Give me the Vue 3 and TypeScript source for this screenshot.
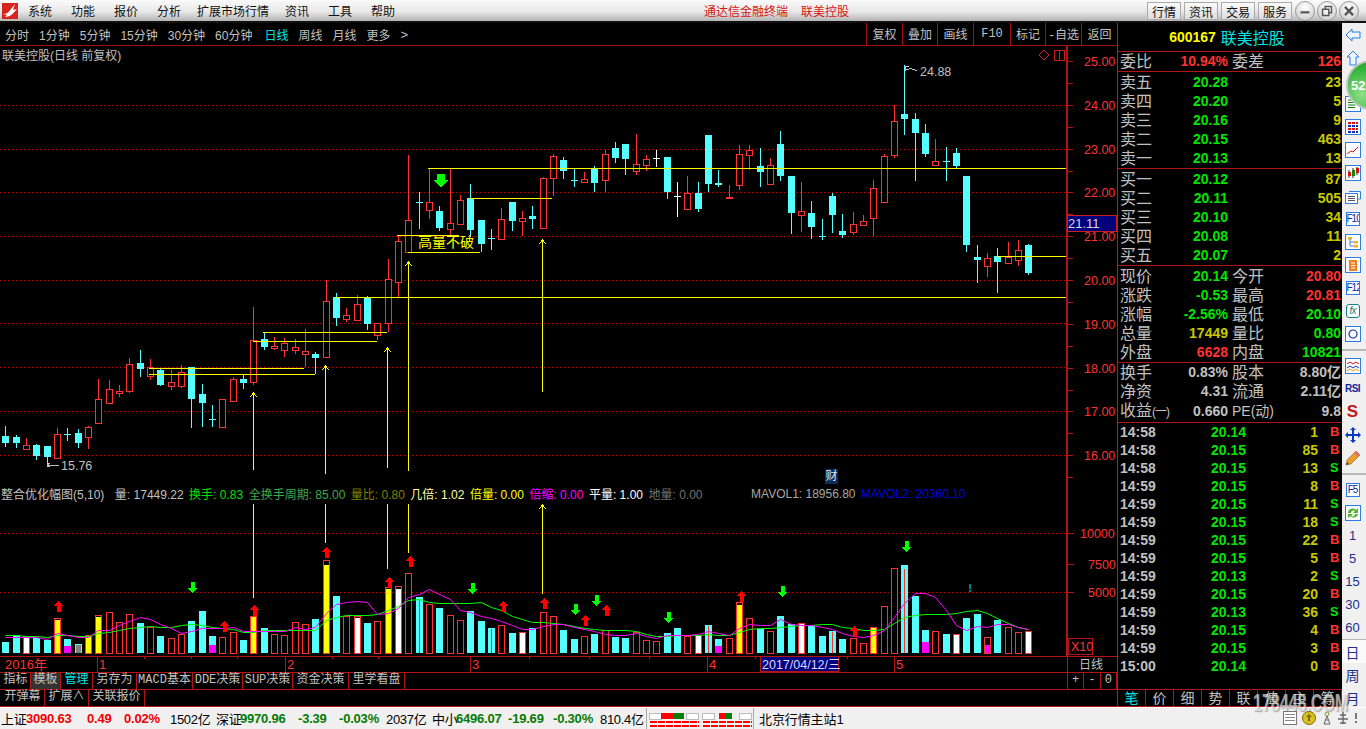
<template>
  <div class="app">
    <header class="titlebar">
      <svg class="logo" viewBox="0 0 16 16">
        <rect width="16" height="16" fill="#d8231f" />
        <path d="M1 11 C5 11 7 9 9 6 L13 1 L11 7 L15 6 C11 11 8 14 3 14 L5 12 Z" fill="#fff" />
      </svg>
      <nav class="menu">
        <span v-for="m in menus" :key="m">{{ m }}</span>
      </nav>
      <div class="app-title">
        <span>通达信金融终端</span>
        <span>联美控股</span>
      </div>
      <div class="top-btns">
        <button v-for="b in topButtons" :key="b">{{ b }}</button>
      </div>
      <div class="win-btns">
        <span class="win"><svg viewBox="0 0 20 20"><path d="M5 11.5 H15" stroke="#555" stroke-width="2.4" /></svg></span>
        <span class="win"><svg viewBox="0 0 20 20"><path d="M5 8 H12 V15 H5 Z M8 8 V5 H15 V12 H12" fill="none" stroke="#555" stroke-width="1.6" /></svg></span>
        <span class="win"><svg viewBox="0 0 20 20"><path d="M5.5 5.5 L14.5 14.5 M14.5 5.5 L5.5 14.5" stroke="#555" stroke-width="2.6" /></svg></span>
      </div>
    </header>

    <div class="body">
      <main class="main">
        <div class="periods">
          <span v-for="p in periods" :key="p" :class="{ active: p === '日线' }">{{ p }}</span>
          <span class="more">&gt;</span>
          <div class="period-tools">
            <span v-for="t in periodTools" :key="t.label" :style="{ width: t.w + 'px' }">{{ t.label }}</span>
          </div>
        </div>

        <section class="pane price-pane">
          <svg class="chart" width="1117" height="440" viewBox="0 46 1117 440">
            <line v-for="y in priceGrid" :key="y" x1="0" x2="1066" :y1="y + 0.5" :y2="y + 0.5" class="dots" />
            <g v-for="c in candleViews" :key="c.i">
              <line :x1="c.x + 0.5" :x2="c.x + 0.5" :y1="c.hi" :y2="c.top" :stroke="c.color" />
              <line :x1="c.x + 0.5" :x2="c.x + 0.5" :y1="c.bot" :y2="c.lo" :stroke="c.color" />
              <rect v-if="c.kind === 'r'" :x="c.x - 2.5" :y="c.top + 0.5" width="6" :height="c.bot - c.top" fill="#000" stroke="#ff3232" />
              <rect v-else :x="c.x - 3" :y="c.top" width="7" :height="Math.max(1, c.bot - c.top)" :fill="c.color" />
            </g>
            <line v-for="l in supportLines" :key="l.join()" :x1="l[0]" :x2="l[1]" :y1="l[2] + 0.5" :y2="l[2] + 0.5" stroke="#ffff00" />
            <g v-for="a in priceArrows" :key="a[0]">
              <line :x1="a[0] + 0.5" :x2="a[0] + 0.5" :y1="a[1]" :y2="a[2]" stroke="#ffff00" />
              <path :d="`M${a[0] - 3} ${a[1] + 4} L${a[0] + 0.5} ${a[1]} L${a[0] + 4} ${a[1] + 4}`" fill="none" stroke="#ffff00" />
            </g>
            <path d="M437 174 H445 V180 H449 L441 187 L433 180 H437 Z" fill="#00ff00" />
            <text x="418" y="247" class="signal">高量不破</text>

            <path d="M47 465 H59 M47 465 L50 463 M47 465 L50 467" stroke="#c0c0c0" fill="none" />
            <text x="61" y="470" class="mark">15.76</text>
            <path d="M905.5 66 H909 M905.5 69 L909 69 C911 67 913 71 917 70 M905.500 66 V71" stroke="#c0c0c0" fill="none" />
            <text x="920" y="76" class="mark">24.88</text>

            <path d="M1044 50 L1049 55 L1044 60 L1039 55 Z" fill="none" stroke="#c81e1e" />
            <path d="M1054.5 50.5 H1064.5 V60.5 H1054.5 Z M1059.5 50.5 V60.5" fill="none" stroke="#c81e1e" />

            <rect x="1066" y="46" width="2" height="440" fill="#b01414" />
            <line v-for="y in priceTicks" :key="y" x1="1068" x2="1073" :y1="y + 0.5" :y2="y + 0.5" stroke="#b01414" />
            <text v-for="l in priceLabels" :key="l.y" x="1084" :y="l.y + 5" class="axis">{{ l.t }}</text>

            <rect x="1067.5" y="215.5" width="49" height="16" fill="#00007d" stroke="#c81e1e" />
            <text x="1068" y="228" class="cursor">21.11</text>
          </svg>
          <span class="fin-tag">财</span>
          <p class="pane-title">联美控股(日线 前复权)</p>
        </section>

        <section class="pane vol-pane">
          <svg class="chart" width="1117" height="170" viewBox="0 486 1117 170">
            <line v-for="y in [533, 592]" :key="y" x1="0" x2="1066" :y1="y + 0.5" :y2="y + 0.5" class="dots" />
            <line v-for="a in volStems" :key="a[0]" :x1="a[0] + 0.5" :x2="a[0] + 0.5" :y1="a[1]" :y2="a[2]" stroke="#ffff00" />
            <path d="M539 509 L542.5 505 L546 509" fill="none" stroke="#ffff00" />
            <g v-for="b in barViews" :key="b.i">
              <template v-if="b.kind === 'c' || b.kind === 'M' || b.kind === 'G' || b.kind === 'L'">
                <rect :x="b.x - 3" :y="b.top" width="7" :height="653 - b.top" fill="#54ffff" />
                <rect v-if="b.kind === 'M'" :x="b.x - 3" :y="b.extra" width="7" :height="653 - b.extra!" fill="#ff00ff" />
                <rect v-if="b.kind === 'G'" :x="b.x - 2" :y="b.top + 1" width="5" :height="652 - b.top" fill="#808080" />
                <line v-if="b.kind === 'L'" :x1="b.x + 0.5" :x2="b.x + 0.5" :y1="b.extra" y2="653" stroke="#ff3232" />
              </template>
              <template v-else>
                <rect :x="b.x - 2.5" :y="b.top + 0.5" width="6" :height="653 - b.top" fill="#000" stroke="#ff3232" />
                <rect v-if="b.kind === 'Y'" :x="b.x - 2" :y="b.extra" width="5" :height="653 - b.extra!" fill="#ffff00" />
                <rect v-if="b.kind === 'W'" :x="b.x - 2" :y="b.extra" width="5" :height="653 - b.extra!" fill="#fff" />
                <rect v-if="b.kind === 'P'" :x="b.x - 2" :y="b.extra" width="5" :height="653 - b.extra!" fill="#ff00ff" />
              </template>
            </g>
            <polyline :points="ma10Points" fill="none" stroke="#00ff00" />
            <polyline :points="ma5Points" fill="none" stroke="#ff00ff" />
            <path v-for="a in upArrows" :key="a.join()" :d="upArrow(a[0], a[1])" fill="#ff0000" />
            <path v-for="a in downArrows" :key="a.join()" :d="downArrow(a[0], a[1])" fill="#00ff00" />
            <path d="M970 584 V589 M970 590 V592" stroke="#008080" stroke-width="2" />

            <rect x="0" y="485" width="1117" height="1" fill="#b01414" />
            <rect x="1066" y="486" width="2" height="170" fill="#b01414" />
            <line v-for="l in volLabels" :key="l.y" x1="1068" x2="1074" :y1="l.y + 0.5" :y2="l.y + 0.5" stroke="#b01414" />
            <text v-for="l in volLabels" :key="l.t" :x="l.x" :y="l.y + 5" class="axis">{{ l.t }}</text>
            <rect x="1068.5" y="638.5" width="24" height="16" fill="none" stroke="#b01414" />
            <text x="1071" y="651" class="axis">X10</text>
          </svg>
          <div class="vol-legend">
            <span class="gray">整合优化幅图(5,10)</span>
            <span class="gray l2">量: 17449.22</span>
            <span class="lime">换手: 0.83</span>
            <span class="sea">全换手周期: 85.00</span>
            <span class="olive">量比: 0.80</span>
            <span class="cream">几倍: 1.02</span>
            <span class="yellow">倍量: 0.00</span>
            <span class="pink">倍缩: 0.00</span>
            <span class="white">平量: 1.00</span>
            <span class="dim">地量: 0.00</span>
            <span class="mv1">MAVOL1: 18956.80</span>
            <span class="mv2">MAVOL2: 20360.10</span>
          </div>
        </section>

        <section class="date-axis">
          <svg width="1117" height="16" viewBox="0 656 1117 16">
            <rect x="0" y="656" width="1117" height="1" fill="#b01414" />
            <line v-for="x in dateSeps" :key="x" :x1="x + 0.5" :x2="x + 0.5" y1="656" y2="672" stroke="#b01414" />
            <line v-for="x in dateTicks" :key="x" :x1="x + 0.5" :x2="x + 0.5" y1="656" y2="659" stroke="#b01414" />
            <text x="5" y="669" class="date">2016年</text>
            <text x="99" y="669" class="date">1</text>
            <text x="287" y="669" class="date">2</text>
            <text x="472" y="669" class="date">3</text>
            <text x="709" y="669" class="date">4</text>
            <text x="896" y="669" class="date">5</text>
            <rect x="760.5" y="656.5" width="78" height="15" fill="#00007d" stroke="#b01414" />
            <text x="762" y="669" class="date-cur">2017/04/12/三</text>
            <text x="1079" y="669" class="date-side">日线</text>
          </svg>
        </section>

        <div class="tabs">
          <span
            v-for="t in tabsA"
            :key="t.label"
            :class="{ cur: t.label === '模板', hot: t.label === '管理' }"
            :style="{ width: t.w + 'px' }"
          >{{ t.label }}</span>
          <div class="zoom-cells">
            <span>+</span><span>-</span><span>0</span>
          </div>
        </div>
        <div class="tabs last">
          <span v-for="t in tabsB" :key="t.label" :style="{ width: t.w + 'px' }">{{ t.label }}</span>
        </div>
      </main>

      <aside class="quote">
        <div class="q-head"><b>600167</b><span>联美控股</span></div>
        <div class="q-row q-sum">
          <span class="lb">委比</span><b class="up">10.94%</b>
          <span class="lb rl">委差</span><b class="up">126</b>
        </div>
        <div class="q-block">
          <div v-for="r in asks" :key="r[0]" class="q-row">
            <span class="lb">{{ r[0] }}</span><b class="dn">{{ r[1] }}</b><i></i><b class="vol">{{ r[2] }}</b>
          </div>
        </div>
        <div class="q-block">
          <div v-for="r in bids" :key="r[0]" class="q-row">
            <span class="lb">{{ r[0] }}</span><b class="dn">{{ r[1] }}</b><i></i><b class="vol">{{ r[2] }}</b>
          </div>
        </div>
        <div class="q-block">
          <div v-for="r in stats" :key="r.a" class="q-row">
            <span class="lb">{{ r.a }}</span><b :class="r.ac">{{ r.av }}</b>
            <span class="lb rl">{{ r.b }}</span><b :class="r.bc">{{ r.bv }}</b>
          </div>
        </div>
        <div class="q-block fin">
          <div v-for="r in finance" :key="r.a" class="q-row">
            <span class="lb">{{ r.a }}<small v-if="r.tail">{{ r.tail }}</small></span><b class="sil">{{ r.av }}</b>
            <span class="lb rl" :class="{ pe: r.tail }">{{ r.b }}</span><b class="sil">{{ r.bv }}</b>
          </div>
        </div>
        <div class="q-ticks">
          <div v-for="(t, n) in ticks" :key="n" class="tick">
            <b class="sil">{{ t[0] }}</b>
            <b class="dn">{{ t[1] }}</b>
            <b class="vol">{{ t[2] }}</b>
            <b :class="t[3] === 'B' ? 'up' : 'dn'">{{ t[3] }}</b>
          </div>
        </div>
        <div class="q-tabs">
          <span v-for="(t, n) in quoteTabs" :key="t" :class="{ hot: n === 0 }">{{ t }}</span>
        </div>
      </aside>

      <div class="side">
        <div class="slot"><svg class="ic" viewBox="0 0 16 16"><path d="M1 8 L7 2 V5 H15 V11 H7 V14 Z" fill="#eef5ff" stroke="#2a7de1" /></svg></div>
        <div class="slot"><svg class="ic" viewBox="0 0 16 16"><path d="M8 1 L14 7 H11 V15 H5 V7 H2 Z" fill="#eef5ff" stroke="#2a7de1" /></svg></div>
        <div class="slot"></div>
        <div class="slot"><svg class="ic" viewBox="0 0 16 16"><rect x=".5" y=".5" width="15" height="15" class="frame" /><path d="M3 4 H10 M3 6.5 H10 M3 9 H10 M3 11.5 H10" stroke="#0a7a0a" /></svg></div>
        <div class="slot"><svg class="ic" viewBox="0 0 16 16"><rect x=".5" y=".5" width="15" height="15" class="frame" /><path d="M3 4 H13" stroke="#e01010" stroke-width="2" stroke-dasharray="3 1" /><path d="M3 7 H13" stroke="#1030c0" stroke-width="2" stroke-dasharray="3 1" /><path d="M3 10 H13" stroke="#e01010" stroke-width="2" stroke-dasharray="3 1" /><path d="M3 13 H13" stroke="#1030c0" stroke-width="2" stroke-dasharray="3 1" /></svg></div>
        <div class="slot"><svg class="ic" viewBox="0 0 16 16"><rect x=".5" y=".5" width="15" height="15" class="frame" /><path d="M2 12 L6 9 L8 10 L13 5" fill="none" stroke="#e01010" /></svg></div>
        <div class="slot"><svg class="ic" viewBox="0 0 16 16"><rect x=".5" y=".5" width="15" height="15" class="frame" /><path d="M4 5 V13 M8 3 V13 M12 2 V10" stroke="#222" /><rect x="3" y="7" width="3" height="4" fill="#e01010" /><rect x="7" y="5" width="3" height="6" fill="#0a8a0a" /><rect x="11" y="3" width="3" height="5" fill="#e01010" /></svg></div>
        <div class="slot"><svg class="ic" viewBox="0 0 16 16"><path d="M4 3.5 H15.5 V11 H13" fill="#fff" stroke="#2a7de1" /><rect x=".5" y="5.5" width="12" height="10" class="frame" /><path d="M3 8.5 H10 M3 10.5 H10 M3 12.5 H10" stroke="#555" /></svg></div>
        <div class="slot"><span class="txt-ic">F10</span></div>
        <div class="slot"><svg class="ic" viewBox="0 0 16 16"><rect x=".5" y=".5" width="15" height="15" class="frame" /><rect x="3" y="3" width="4" height="2.5" fill="#f0b020" /><rect x="9" y="7" width="4" height="2.5" fill="#f0b020" /><rect x="9" y="11" width="4" height="2.5" fill="#f0b020" /><path d="M5 5 V12 H9 M5 8 H9" fill="none" stroke="#5080d0" /></svg></div>
        <div class="slot"><svg class="ic" viewBox="0 0 16 16"><rect x=".5" y=".5" width="15" height="15" class="frame" /><rect x="4" y="3" width="8" height="11" fill="#f08020" /><path d="M6 6 H10 M6 8.5 H10 M6 11 H10" stroke="#fff" /></svg></div>
        <div class="slot"><span class="txt-ic">F12</span></div>
        <div class="slot"><span class="txt-ic fx">fx</span></div>
        <div class="slot"><svg class="ic" viewBox="0 0 16 16"><rect x=".5" y=".5" width="15" height="15" class="frame" /><circle cx="8" cy="8" r="4" fill="none" stroke="#1030a0" stroke-width="1.2" /></svg></div>
        <div class="sep"></div>
        <div class="slot"><svg class="ic" viewBox="0 0 16 16"><rect x=".5" y=".5" width="15" height="15" class="frame" /><path d="M2 6 L5 4 L8 6 L11 4 L14 6" fill="none" stroke="#e01010" /><path d="M2 10 L5 8 L8 10 L11 8 L14 10" fill="none" stroke="#1030c0" /><path d="M2 13 L5 11 L8 13 L11 11 L14 13" fill="none" stroke="#e0a010" /></svg></div>
        <div class="slot"><span class="rsi">RSI</span></div>
        <div class="slot"><span class="dollar">S</span></div>
        <div class="slot"><svg class="ic" viewBox="0 0 16 16"><path d="M8 0 L11 3 H9 V7 H13 V5 L16 8 L13 11 V9 H9 V13 H11 L8 16 L5 13 H7 V9 H3 V11 L0 8 L3 5 V7 H7 V3 H5 Z" fill="#0a3ac0" /></svg></div>
        <div class="slot"><svg class="ic" viewBox="0 0 16 16"><path d="M11 1 L15 5 L6 14 L1 15 L2 10 Z" fill="#e8a030" stroke="#a06010" stroke-width=".6" /><path d="M1 15 L2 12 L4 14 Z" fill="#444" /><path d="M11 1 L15 5 L13 7 L9 3 Z" fill="#e07070" /></svg></div>
        <div class="sep"></div>
        <div class="slot"><span class="txt-ic">F5</span></div>
        <div class="slot"><svg class="ic" viewBox="0 0 16 16"><rect x=".5" y=".5" width="15" height="15" class="frame" /><path d="M3 8 C3 4 8 2 11 5 L13 3 V8 H8 L10 6 C8 5 6 6 6 8 Z M13 9 C13 12 8 14 5 11 L3 13 V9 H8 L6 11 C8 12 10 11 10 9 Z" fill="#50b030" /></svg></div>
        <div v-for="n in ['1', '5', '15', '30', '60']" :key="n" class="slot num">{{ n }}</div>
        <div class="slot num day">日</div>
        <div class="slot num wide">周</div>
        <div class="slot num wide">月</div>
        <div class="badge"><span>52</span></div>
      </div>
    </div>

    <footer class="status">
      <span v-for="s in statusItems" :key="s.x" :class="s.cls" :style="{ width: s.w + 'px' }">{{ s.t }}</span>
      <div class="meter">
        <svg width="104" height="18" viewBox="0 0 104 18">
          <rect x=".5" y="3.5" width="12" height="6" fill="#fff" stroke="#bbb" />
          <rect x="12" y="3" width="12" height="6" fill="#f00" />
          <rect x="24" y="3" width="11" height="6" fill="#087f08" />
          <rect x="37.5" y="3.5" width="12" height="6" fill="#fff" stroke="#bbb" />
          <rect x="53.5" y="3.5" width="12" height="6" fill="#fff" stroke="#bbb" />
          <rect x="70" y="3" width="7" height="6" fill="#f00" />
          <rect x="77" y="3" width="6" height="6" fill="#087f08" />
          <rect x="90.5" y="3.5" width="12" height="6" fill="#fff" stroke="#bbb" />
          <path d="M1 12 H50 M1 15.5 H50 M54 12 H103 M54 15.5 H103" stroke="#f00" stroke-width="2" stroke-dasharray="6.5 1.5" />
        </svg>
      </div>
      <span class="server">北京行情主站1</span>
      <div class="tray">
        <svg width="14" height="14" viewBox="0 0 14 14"><rect x=".5" y=".5" width="13" height="13" fill="#fff" stroke="#777" /><path d="M2 3.5 H12 M2 6.5 H12 M2 9.5 H12" stroke="#888" /></svg>
        <svg width="14" height="14" viewBox="0 0 14 14"><circle cx="7" cy="7" r="6.5" fill="#d8c020" stroke="#806a00" /><path d="M7 3 L10 6 H8 V10 H6 V6 H4 Z" fill="#806a00" /></svg>
        <svg width="12" height="14" viewBox="0 0 12 14"><path d="M6 5 L3 13 M6 5 L9 13 M3 13 H9 M4.500 9 H7.500" stroke="#666" fill="none" /><circle cx="6" cy="3" r="2" fill="none" stroke="#7a9a30" /></svg>
        <svg width="11" height="14" viewBox="0 0 11 14"><path d="M5 1 V13 M2 4 H8 M0 8 H10 M2 12 H8" stroke="#666" stroke-width="1.4" /></svg>
        <svg width="4" height="14" viewBox="0 0 4 14"><path d="M2 2 V8 M2 10 V12" stroke="#777" stroke-width="2" /></svg>
      </div>
      <span class="wm">178448.COM</span>
    </footer>
  </div>
</template>

<script setup lang="ts">
type Candle = [number, number, number, number, 'c' | 'r' | 'w']
type Bar = [number, string, number?]

const menus = ['系统', '功能', '报价', '分析', '扩展市场行情', '资讯', '工具', '帮助']
const topButtons = ['行情', '资讯', '交易', '服务']
const periods = ['分时', '1分钟', '5分钟', '15分钟', '30分钟', '60分钟', '日线', '周线', '月线', '更多']
const periodTools = [
  { label: '复权', w: 36 },
  { label: '叠加', w: 35 },
  { label: '画线', w: 36 },
  { label: 'F10', w: 37 },
  { label: '标记', w: 35 },
  { label: '-自选', w: 36 },
  { label: '返回', w: 36 },
]
const tabsA = [
  { label: '指标', w: 30 },
  { label: '模板', w: 30 },
  { label: '管理', w: 32 },
  { label: '另存为', w: 44 },
  { label: 'MACD基本', w: 56 },
  { label: 'DDE决策', w: 50 },
  { label: 'SUP决策', w: 50 },
  { label: '资金决策', w: 56 },
  { label: '里学看盘', w: 56 },
]
const tabsB = [
  { label: '开弹幕', w: 44 },
  { label: '扩展∧', w: 44 },
  { label: '关联报价', w: 56 },
]

// 每根K线: 最高 实体上沿 实体下沿 最低 类型 (屏幕坐标)
const candles: Candle[] = [
  [426, 436, 443, 447, 'c'], [435, 437, 443, 448, 'c'], [438, 445, 449, 449, 'r'], [444, 445, 456, 460, 'c'],
  [446, 446, 457, 467, 'c'], [428, 434, 458, 459, 'r'], [428, 434, 434, 441, 'c'], [429, 433, 443, 448, 'c'],
  [426, 427, 437, 449, 'r'], [379, 399, 423, 423, 'r'], [380, 389, 403, 403, 'r'], [385, 391, 393, 397, 'r'],
  [358, 364, 391, 393, 'r'], [350, 363, 369, 377, 'c'], [359, 367, 376, 380, 'r'], [368, 370, 385, 386, 'c'],
  [370, 382, 386, 390, 'r'], [365, 372, 386, 388, 'r'], [367, 367, 399, 428, 'c'], [384, 394, 403, 427, 'c'],
  [405, 419, 419, 427, 'c'], [399, 399, 427, 427, 'r'], [377, 379, 401, 402, 'r'], [375, 379, 383, 389, 'c'],
  [307, 340, 382, 385, 'r'], [333, 339, 347, 350, 'c'], [337, 346, 348, 350, 'r'], [338, 343, 350, 357, 'r'],
  [339, 347, 350, 354, 'r'], [329, 351, 354, 367, 'r'], [352, 354, 358, 374, 'c'], [280, 301, 357, 357, 'r'],
  [293, 297, 318, 326, 'c'], [308, 315, 319, 322, 'r'], [295, 304, 320, 320, 'r'], [296, 297, 324, 330, 'c'],
  [323, 323, 335, 340, 'r'], [259, 279, 323, 332, 'r'], [236, 241, 282, 297, 'r'], [155, 220, 252, 252, 'r'],
  [192, 202, 202, 229, 'c'], [169, 202, 210, 219, 'r'], [206, 211, 228, 231, 'c'], [169, 223, 229, 235, 'r'],
  [195, 200, 224, 224, 'r'], [184, 198, 230, 237, 'c'], [220, 220, 244, 252, 'c'], [229, 238, 238, 250, 'c'],
  [208, 219, 239, 239, 'r'], [202, 202, 221, 231, 'c'], [211, 218, 221, 236, 'r'], [206, 216, 219, 229, 'c'],
  [177, 178, 228, 228, 'r'], [154, 156, 178, 196, 'r'], [157, 160, 171, 179, 'c'], [169, 180, 180, 187, 'c'],
  [172, 179, 182, 183, 'r'], [166, 168, 183, 192, 'c'], [150, 154, 180, 192, 'r'], [142, 148, 158, 163, 'c'],
  [144, 144, 159, 175, 'c'], [134, 164, 171, 175, 'r'], [155, 159, 165, 171, 'r'], [150, 158, 158, 167, 'w'],
  [157, 157, 192, 199, 'c'], [182, 196, 196, 217, 'w'], [176, 193, 209, 209, 'r'], [182, 193, 209, 212, 'c'],
  [135, 135, 184, 192, 'c'], [170, 183, 185, 187, 'c'], [185, 197, 198, 199, 'r'], [145, 154, 185, 190, 'r'],
  [145, 150, 155, 170, 'r'], [148, 166, 172, 187, 'c'], [158, 165, 184, 184, 'r'], [131, 144, 176, 181, 'c'],
  [176, 176, 213, 234, 'c'], [182, 211, 215, 232, 'r'], [201, 213, 227, 239, 'c'], [219, 236, 236, 240, 'c'],
  [193, 196, 215, 233, 'c'], [214, 231, 235, 238, 'c'], [212, 224, 232, 235, 'r'], [215, 221, 225, 225, 'r'],
  [180, 188, 218, 236, 'r'], [154, 156, 202, 202, 'r'], [105, 121, 155, 158, 'r'], [65, 114, 119, 135, 'c'],
  [113, 119, 133, 181, 'c'], [124, 133, 154, 157, 'c'], [139, 161, 165, 165, 'r'], [147, 161, 161, 181, 'c'],
  [148, 153, 166, 168, 'c'], [176, 176, 245, 252, 'c'], [245, 257, 260, 283, 'c'], [253, 258, 266, 277, 'r'],
  [248, 256, 262, 293, 'c'], [242, 257, 263, 264, 'r'], [240, 250, 260, 266, 'r'], [244, 245, 273, 275, 'c'],
]

const candleX = (i: number) => 5 + Math.ceil((i * 31) / 3)
const candleColor = { c: '#54ffff', r: '#ff3232', w: '#ffffff' }
const candleViews = candles.map((c, i) => ({
  i,
  x: candleX(i),
  hi: c[0],
  top: c[1],
  bot: c[2],
  lo: c[3],
  kind: c[4],
  color: candleColor[c[4]],
}))

const priceGrid = [105, 149, 192, 236, 280, 323, 367, 411, 455]
const priceLabels = ['25.00', '24.00', '23.00', '22.00', '21.00', '20.00', '19.00', '18.00', '17.00', '16.00'].map(
  (t, n) => ({ t, y: Math.round(61 + n * 43.8) }),
)
const priceTicks = Array.from({ length: 20 }, (_, n) => Math.round(61 + n * 21.9))

const supportLines = [
  [149, 304, 368],
  [149, 315, 374],
  [263, 387, 332],
  [253, 377, 341],
  [336, 1066, 297],
  [428, 1066, 168],
  [470, 552, 198],
  [397, 459, 235],
  [408, 480, 252],
  [997, 1066, 256],
]
const priceArrows = [
  [253, 393, 470],
  [325, 366, 474],
  [387, 348, 468],
  [408, 262, 471],
  [542, 240, 392],
]

const volStems = [
  [253, 504, 598],
  [325, 504, 543],
  [387, 504, 569],
  [408, 504, 553],
  [542, 505, 594],
]

// 成交量柱: 顶部y 类型 内部填充起点
const bars: Bar[] = [
  [642, 'c'], [635, 'c'], [636, 'W', 637], [638, 'c'], [640, 'c'], [618, 'Y', 620], [639, 'M', 646], [644, 'G'],
  [635, 'Y', 636], [615, 'Y', 617], [612, 'r'], [622, 'r'], [614, 'r'], [623, 'c'], [627, 'r'], [636, 'c'],
  [638, 'r'], [634, 'r'], [621, 'c'], [611, 'c'], [636, 'M', 645], [637, 'r'], [632, 'r'], [640, 'c'],
  [616, 'Y', 617], [628, 'c'], [634, 'r'], [635, 'r'], [622, 'r'], [624, 'r'], [619, 'c'], [560, 'Y', 565],
  [596, 'c'], [616, 'r'], [616, 'W', 618], [623, 'c'], [621, 'r'], [587, 'Y', 589], [586, 'W', 589], [573, 'r'],
  [597, 'L', 600], [604, 'r'], [608, 'c'], [615, 'r'], [620, 'r'], [611, 'c'], [621, 'c'], [628, 'L', 629],
  [625, 'r'], [633, 'c'], [632, 'W', 633], [628, 'c'], [612, 'r'], [616, 'r'], [630, 'c'], [639, 'c'],
  [636, 'r'], [634, 'c'], [630, 'r'], [637, 'c'], [638, 'c'], [632, 'r'], [640, 'r'], [641, 'r'],
  [633, 'c'], [628, 'c'], [636, 'r'], [635, 'W', 636], [625, 'L', 626], [639, 'M', 646], [638, 'r'], [602, 'Y', 605],
  [618, 'r'], [629, 'c'], [631, 'r'], [616, 'c'], [624, 'c'], [623, 'W', 624], [625, 'c'], [636, 'c'],
  [631, 'L', 632], [639, 'c'], [638, 'r'], [643, 'r'], [627, 'Y', 628], [606, 'r'], [568, 'r'], [565, 'L', 569],
  [596, 'c'], [630, 'M', 642], [631, 'r'], [634, 'c'], [634, 'W', 635], [618, 'c'], [614, 'c'], [637, 'P', 645],
  [620, 'c'], [627, 'r'], [632, 'r'], [631, 'W', 632],
]
const barViews = bars.map((b, i) => ({ i, x: candleX(i), top: b[0], kind: b[1], extra: b[2] }))

const ma5 = [
  637, 637, 637, 637, 639, 633, 635, 637, 637, 630, 630, 625, 621, 617, 619, 624, 628, 633, 631, 628,
  628, 628, 627, 631, 631, 631, 631, 631, 627, 629, 627, 613, 604, 602, 601, 602, 614, 613, 608, 597,
  594, 589, 594, 599, 610, 612, 616, 618, 621, 625, 629, 629, 626, 624, 624, 627, 629, 631, 634, 635,
  635, 633, 636, 638, 635, 635, 635, 634, 631, 633, 635, 628, 624, 625, 625, 619, 624, 625, 625, 627,
  629, 633, 636, 637, 635, 630, 617, 603, 593, 593, 597, 610, 625, 630, 626, 627, 624, 624, 627, 629,
]
const ma10 = [
  635, 635, 636, 636, 637, 635, 635, 636, 636, 633, 632, 630, 628, 627, 626, 627, 627, 625, 624, 625,
  627, 628, 629, 632, 632, 630, 630, 630, 630, 630, 630, 620, 617, 615, 615, 615, 614, 610, 606, 600,
  599, 602, 603, 603, 603, 603, 602, 607, 610, 616, 619, 622, 622, 623, 624, 626, 628, 629, 630, 630,
  630, 631, 634, 636, 636, 635, 635, 635, 634, 635, 635, 632, 629, 628, 628, 627, 626, 625, 625, 624,
  624, 627, 628, 630, 630, 629, 623, 617, 615, 614, 614, 614, 613, 611, 610, 613, 618, 623, 627, 629,
]
const toPoints = (ys: number[]) => ys.map((y, i) => `${candleX(i) + 0.5},${y + 0.5}`).join(' ')
const ma5Points = toPoints(ma5)
const ma10Points = toPoints(ma10)

const upArrows = [
  [58, 607], [224, 627], [254, 611], [326, 553], [389, 583], [410, 562], [503, 607], [544, 604],
  [585, 621], [606, 611], [741, 597], [854, 632],
]
const downArrows = [[192, 587], [472, 588], [575, 609], [596, 600], [668, 617], [782, 591], [906, 546]]
const upArrow = (x: number, y: number) =>
  `M${x + 0.5} ${y - 6} L${x + 5.5} ${y - 1} H${x + 2.5} V${y + 5} H${x - 1.5} V${y - 1} H${x - 4.5} Z`
const downArrow = (x: number, y: number) =>
  `M${x + 0.5} ${y + 6} L${x + 5.5} ${y + 1} H${x + 2.5} V${y - 5} H${x - 1.5} V${y + 1} H${x - 4.5} Z`

const volLabels = [
  { t: '10000', x: 1080, y: 533 },
  { t: '7500', x: 1088, y: 564 },
  { t: '5000', x: 1088, y: 592 },
]

const dateSeps = [97, 285, 470, 707, 894, 1067]
const dateTicks = [144, 191, 237, 332, 378, 529, 589, 649, 755, 847]

const asks = [
  ['卖五', '20.28', '23'],
  ['卖四', '20.20', '5'],
  ['卖三', '20.16', '9'],
  ['卖二', '20.15', '463'],
  ['卖一', '20.13', '13'],
]
const bids = [
  ['买一', '20.12', '87'],
  ['买二', '20.11', '505'],
  ['买三', '20.10', '34'],
  ['买四', '20.08', '11'],
  ['买五', '20.07', '2'],
]
const stats = [
  { a: '现价', av: '20.14', ac: 'dn', b: '今开', bv: '20.80', bc: 'up' },
  { a: '涨跌', av: '-0.53', ac: 'dn', b: '最高', bv: '20.81', bc: 'up' },
  { a: '涨幅', av: '-2.56%', ac: 'dn', b: '最低', bv: '20.10', bc: 'dn' },
  { a: '总量', av: '17449', ac: 'vol', b: '量比', bv: '0.80', bc: 'dn' },
  { a: '外盘', av: '6628', ac: 'up', b: '内盘', bv: '10821', bc: 'dn' },
]
const finance = [
  { a: '换手', tail: '', av: '0.83%', b: '股本', bv: '8.80亿' },
  { a: '净资', tail: '', av: '4.31', b: '流通', bv: '2.11亿' },
  { a: '收益', tail: '(一)', av: '0.660', b: 'PE(动)', bv: '9.8' },
]
const ticks = [
  ['14:58', '20.14', '1', 'B'],
  ['14:58', '20.15', '85', 'B'],
  ['14:58', '20.15', '13', 'S'],
  ['14:59', '20.15', '8', 'B'],
  ['14:59', '20.15', '11', 'S'],
  ['14:59', '20.15', '18', 'S'],
  ['14:59', '20.15', '22', 'B'],
  ['14:59', '20.15', '5', 'B'],
  ['14:59', '20.13', '2', 'S'],
  ['14:59', '20.15', '20', 'B'],
  ['14:59', '20.13', '36', 'S'],
  ['14:59', '20.15', '4', 'B'],
  ['14:59', '20.15', '3', 'B'],
  ['15:00', '20.14', '0', 'B'],
]
const quoteTabs = ['笔', '价', '细', '势', '联', '值', '主', '筹']

const statusItems = [
  { x: 1, w: 25, t: '上证', cls: 'st-k' },
  { x: 26, w: 61, t: '3090.63', cls: 'st-r' },
  { x: 87, w: 37, t: '0.49', cls: 'st-r' },
  { x: 124, w: 46, t: '0.02%', cls: 'st-r' },
  { x: 170, w: 46, t: '1502亿', cls: 'st-k' },
  { x: 216, w: 24, t: '深证', cls: 'st-k' },
  { x: 240, w: 58, t: '9970.96', cls: 'st-g' },
  { x: 298, w: 41, t: '-3.39', cls: 'st-g' },
  { x: 339, w: 47, t: '-0.03%', cls: 'st-g' },
  { x: 386, w: 46, t: '2037亿', cls: 'st-k' },
  { x: 432, w: 24, t: '中小', cls: 'st-k' },
  { x: 456, w: 52, t: '6496.07', cls: 'st-g' },
  { x: 508, w: 45, t: '-19.69', cls: 'st-g' },
  { x: 553, w: 47, t: '-0.30%', cls: 'st-g' },
  { x: 600, w: 46, t: '810.4亿', cls: 'st-k' },
]
</script>

<style>
html,
body {
  margin: 0;
  background: #000;
}
</style>

<style scoped>
.app {
  width: 1366px;
  height: 729px;
  overflow: hidden;
  display: flex;
  flex-direction: column;
  background: #000;
  font-family: "Liberation Sans", "Noto Sans CJK SC", sans-serif;
  font-size: 12px;
  color: #c0c0c0;
}

/* 标题栏 */
.titlebar {
  height: 23px;
  flex: none;
  display: flex;
  align-items: center;
  box-sizing: border-box;
  border-bottom: 2px solid #111;
  background: linear-gradient(#fafafa, #e8e8e8 55%, #b4b4b4);
  color: #111;
}
.logo {
  width: 16px;
  height: 16px;
  margin-left: 2px;
  flex: none;
}
.menu {
  display: flex;
  gap: 19px;
  margin-left: 10px;
  width: 450px;
  flex: none;
}
.menu span:nth-child(5),
.menu span:nth-child(6) {
  margin-left: -3px;
}
.app-title {
  margin-left: 226px;
  display: flex;
  gap: 13px;
  color: #d81414;
  flex: none;
}
.top-btns {
  margin-left: 298px;
  display: flex;
  gap: 3px;
  flex: none;
}
.top-btns button {
  width: 34px;
  height: 18px;
  padding: 0;
  border: 1px solid #aaa;
  background: linear-gradient(#fbfbfb, #dcdcdc);
  font: inherit;
  color: #111;
}
.win-btns {
  margin-left: 3px;
  display: flex;
  gap: 2px;
}
.win {
  width: 20px;
  height: 20px;
  border-radius: 50%;
  border: 1px solid #9a9a9a;
  box-sizing: border-box;
  background: radial-gradient(circle at 50% 30%, #fff, #c8c8c8);
  display: block;
}
.win svg {
  display: block;
  width: 18px;
  height: 18px;
}

.body {
  height: 684px;
  flex: none;
  display: flex;
  position: relative;
}
.main {
  width: 1117px;
  flex: none;
  display: flex;
  flex-direction: column;
}

.periods {
  height: 23px;
  flex: none;
  box-sizing: border-box;
  border-bottom: 1px solid #a01010;
  display: flex;
  align-items: center;
  gap: 10px;
  padding-left: 5px;
}
.periods .active {
  color: #00e6e6;
  margin-left: 2px;
}
.more {
  font-size: 13px;
}
.period-tools {
  margin-left: auto;
  display: flex;
  align-self: stretch;
  font-family: "Liberation Mono", "Noto Sans CJK SC", monospace;
}
.period-tools span {
  box-sizing: border-box;
  border-left: 1px solid #a01010;
  display: flex;
  align-items: center;
  justify-content: center;
}

.pane {
  position: relative;
  flex: none;
}
.price-pane {
  height: 440px;
}
.vol-pane {
  height: 170px;
}
.chart {
  display: block;
  shape-rendering: crispEdges;
}
.chart polyline {
  shape-rendering: auto;
}
.dots {
  stroke: #d00000;
  stroke-dasharray: 1 3;
}
.axis {
  fill: #ff3232;
  font-size: 12.5px;
}
.mark {
  fill: #c0c0c0;
  font-size: 12.5px;
}
.signal {
  fill: #ffff00;
  font-size: 14px;
}
.cursor {
  fill: #d8d8d8;
  font-size: 13px;
}
.pane-title {
  position: absolute;
  left: 2px;
  top: 2px;
  margin: 0;
  line-height: 17px;
}
.fin-tag {
  position: absolute;
  left: 825px;
  top: 423px;
  width: 13px;
  height: 15px;
  line-height: 15px;
  text-align: center;
  background: #0a2a60;
  color: #e0e0e0;
}

.vol-legend {
  position: absolute;
  left: 1px;
  top: -1px;
  height: 17px;
  display: flex;
  align-items: center;
  gap: 5.5px;
  white-space: nowrap;
}
.l2 { margin-left: 5px; }
.gray { color: #c0c0c0; }
.lime { color: #00e000; }
.sea { color: #3ea84e; }
.olive { color: #808000; }
.cream { color: #ffffa0; }
.yellow { color: #ffff00; }
.pink { color: #ff00ff; }
.white { color: #fff; }
.dim { color: #707070; }
.mv1 { color: #a8a8a8; margin-left: 43px; }
.mv2 { color: #0000e0; }

.date-axis {
  height: 16px;
  flex: none;
}
.date-axis svg {
  display: block;
  shape-rendering: crispEdges;
}
.date {
  fill: #ff3232;
  font-size: 13px;
}
.date-cur {
  fill: #d8d8ff;
  font-size: 12.5px;
}
.date-side {
  fill: #c0c0c0;
  font-size: 12px;
}

.tabs {
  height: 17px;
  flex: none;
  box-sizing: border-box;
  border-top: 1px solid #b01414;
  display: flex;
  padding-left: 1px;
  position: relative;
  font-family: "Liberation Mono", "Noto Sans CJK SC", monospace;
}
.tabs.last {
  height: 18px;
  border-bottom: 1px solid #b01414;
}
.tabs span {
  box-sizing: border-box;
  border-right: 1px solid #b01414;
  text-align: center;
  line-height: 15px;
  white-space: nowrap;
}
.tabs .cur {
  background: #333;
}
.tabs .hot {
  color: #00e6e6;
}
.zoom-cells {
  position: absolute;
  left: 1067px;
  top: 0;
  display: flex;
  width: 50px;
  height: 16px;
  border-left: 1px solid #b01414;
  box-sizing: border-box;
}
.zoom-cells span {
  flex: 1;
  line-height: 15px;
}

/* 右侧报价 */
.quote {
  width: 225px;
  flex: none;
  box-sizing: border-box;
  border-left: 1px solid #c81414;
  display: flex;
  flex-direction: column;
}
.q-head {
  height: 29px;
  flex: none;
  box-sizing: border-box;
  display: flex;
  align-items: center;
  justify-content: center;
  gap: 5px;
  padding-right: 6px;
  border-bottom: 1px solid #b01414;
}
.q-head b {
  color: #ffff00;
  font-size: 14px;
}
.q-head span {
  color: #00e6e6;
  font-size: 16px;
}
.q-row {
  display: grid;
  grid-template-columns: 32px 76px 36px 1fr;
  height: 19px;
  line-height: 19px;
  padding: 0 1px 0 2px;
  white-space: nowrap;
  align-items: center;
}
.q-row b {
  text-align: right;
  font-size: 14px;
}
.lb {
  font-size: 16px;
  color: #c0c0c0;
}
.lb small {
  font-size: 12px;
  letter-spacing: -1px;
}
.lb.pe {
  font-size: 14px;
}
.rl {
  padding-left: 4px;
}
.q-sum {
  height: 20px;
  flex: none;
  box-sizing: border-box;
  border-bottom: 1px solid #b01414;
}
.q-block {
  flex: none;
  height: 97px;
  box-sizing: border-box;
  padding-top: 1px;
  border-bottom: 1px solid #b01414;
}
.q-block.fin {
  height: 60px;
  padding-top: 0;
}
.up { color: #ff3232; }
.dn { color: #00e600; }
.vol { color: #c8c800; }
.sil { color: #c0c0c0; }

.q-ticks {
  flex: none;
  height: 266px;
  box-sizing: border-box;
}
.tick {
  height: 18px;
  line-height: 18px;
  display: grid;
  grid-template-columns: 50px 76px 72px 1fr;
  padding-left: 2px;
}
.tick b {
  font-size: 14px;
  text-align: right;
}
.tick b:first-child {
  text-align: left;
}
.tick b:last-child {
  text-align: left;
  padding-left: 12px;
  font-size: 13px;
}
.q-tabs {
  height: 18px;
  flex: none;
  box-sizing: border-box;
  border-top: 1px solid #b01414;
  border-bottom: 1px solid #b01414;
  display: grid;
  grid-template-columns: repeat(7, 28px) 1fr;
}
.q-tabs span {
  text-align: center;
  font-size: 14px;
  line-height: 16px;
  border-right: 1px solid #b01414;
}
.q-tabs .hot {
  color: #00e6e6;
}

/* 右侧工具条 */
.side {
  width: 24px;
  flex: none;
  background: #f0f0f0;
  position: relative;
  overflow: hidden;
  color: #1a2e8c;
}
.slot {
  height: 23px;
  display: flex;
  align-items: center;
  justify-content: center;
  box-sizing: border-box;
  padding-right: 3px;
}
.ic {
  width: 16px;
  height: 16px;
  display: block;
}
.frame {
  fill: #fff;
  stroke: #2a7de1;
}
.sep {
  height: 9px;
  box-sizing: border-box;
  border-bottom: 2px solid #b8b8b8;
  transform: translateY(-3px);
}
.txt-ic {
  width: 14px;
  height: 14px;
  box-sizing: border-box;
  border: 1px solid #2a7de1;
  background: #fff;
  color: #10289c;
  font-size: 10px;
  font-weight: 400;
  letter-spacing: -1px;
  line-height: 12px;
  text-align: center;
  overflow: hidden;
}
.txt-ic.fx {
  border-color: #108080;
  border-radius: 3px;
  color: #108080;
  font-style: italic;
}
.rsi {
  color: #10289c;
  font-size: 10px;
  font-weight: 700;
  letter-spacing: -0.5px;
}
.dollar {
  color: #c01818;
  font-size: 17px;
  font-weight: 700;
}
.num {
  font-size: 13px;
}
.day {
  background: #fafafa;
  border-top: 1px solid #b8b8b8;
  height: 24px;
  font-size: 14px;
}
.num.wide {
  font-size: 14px;
}
.badge {
  position: absolute;
  left: 4px;
  top: 37px;
  width: 50px;
  height: 50px;
  box-sizing: border-box;
  border-radius: 50%;
  border: 2px solid #bcc8bc;
  background: radial-gradient(circle at 30% 70%, #8ee08a, #34b33a 55%, #1e8e2c);
  color: #fff;
  font-weight: 700;
  font-size: 13px;
}
.badge span {
  position: absolute;
  left: 3px;
  top: 16px;
}

/* 状态栏 */
.status {
  height: 22px;
  flex: none;
  background: #f0f0f0;
  border-top: 1px solid #fff;
  box-sizing: border-box;
  display: flex;
  align-items: center;
  padding-left: 1px;
  color: #000;
  position: relative;
  white-space: nowrap;
  font-size: 13px;
}
.status > span {
  flex: none;
}
.st-k {
  font-weight: 400;
  letter-spacing: -0.3px;
}
.st-r {
  color: #f00000;
  font-weight: 700;
  letter-spacing: -0.2px;
}
.st-g {
  color: #067a06;
  font-weight: 700;
  letter-spacing: -0.2px;
}
.meter {
  flex: none;
  height: 21px;
  width: 108px;
  box-sizing: border-box;
  border-left: 1px solid #aaa;
  border-right: 1px solid #aaa;
  padding: 2px 0 0 2px;
}
.meter svg {
  display: block;
  shape-rendering: crispEdges;
}
.status > .server {
  margin-left: 5px;
  letter-spacing: -0.1px;
}
.tray {
  position: absolute;
  left: 1283px;
  top: 3px;
  display: flex;
  align-items: center;
  gap: 5px;
}
.status > .wm {
  position: absolute;
  left: 1253px;
  top: -14px;
  font-size: 16px;
  font-weight: 700;
  color: rgba(240, 240, 240, 0.65);
  text-shadow: 1px 1px 1px rgba(90, 90, 90, 0.5);
  transform: scaleY(1.5);
}
</style>
